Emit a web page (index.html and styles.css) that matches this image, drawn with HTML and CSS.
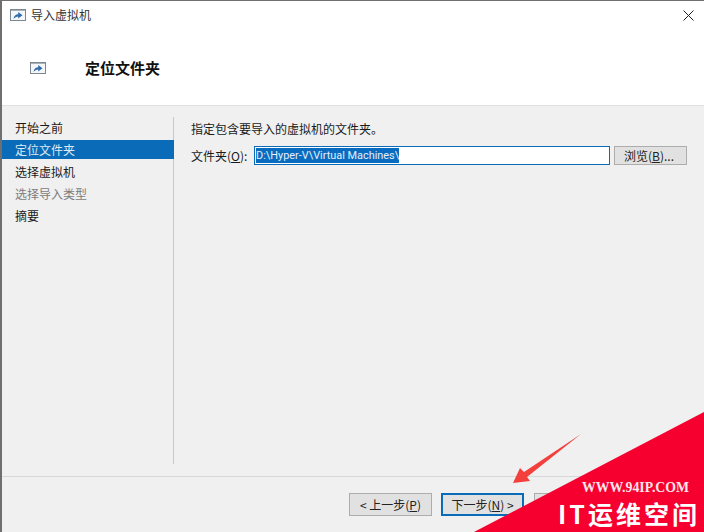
FILE: index.html
```html
<!DOCTYPE html>
<html lang="zh">
<head>
<meta charset="utf-8">
<title>导入虚拟机</title>
<link rel="stylesheet" href="styles.css">
</head>
<body>
<div class="window">
  <header class="head">
    <div class="titlebar">
      <svg class="icon" viewBox="0 0 16 12"><rect x=".5" y=".5" width="15" height="11" fill="#f4f6f8" stroke="#7d8792"/><rect x="1" y="1" width="14" height="1" fill="#a9b1ba"/><path d="M3.5 10 C3.8 6.8 5.8 5.3 8.2 5.2 V3 L12.5 6.3 8.2 9.4 V7.4 C6.4 7.4 4.8 8.2 3.5 10Z" fill="#2f6ea8"/></svg>
      <span class="wintitle">导入虚拟机</span>
      <svg class="close" viewBox="0 0 11 11"><path d="M.5.5 10.5 10.5M10.5.5.5 10.5" stroke="#222" stroke-width="1" fill="none"/></svg>
    </div>
    <div class="banner">
      <svg class="icon" viewBox="0 0 16 12"><rect x=".5" y=".5" width="15" height="11" fill="#f4f6f8" stroke="#7d8792"/><rect x="1" y="1" width="14" height="1" fill="#a9b1ba"/><path d="M3.5 10 C3.8 6.8 5.8 5.3 8.2 5.2 V3 L12.5 6.3 8.2 9.4 V7.4 C6.4 7.4 4.8 8.2 3.5 10Z" fill="#2f6ea8"/></svg>
      <h1 class="pagetitle">定位文件夹</h1>
    </div>
  </header>
  <main class="body">
    <nav class="steps">
      <div class="step">开始之前</div>
      <div class="step current">定位文件夹</div>
      <div class="step">选择虚拟机</div>
      <div class="step disabled">选择导入类型</div>
      <div class="step">摘要</div>
    </nav>
    <section class="content">
      <p class="lead">指定包含要导入的虚拟机的文件夹。</p>
      <div class="field">
        <label class="label">文件夹(<u>O</u>):</label>
        <div class="input"><span class="selected">D:\Hyper-V\Virtual Machines\</span></div>
        <button class="btn browse">浏览(<u>B</u>)...</button>
      </div>
    </section>
  </main>
  <footer class="foot">
    <button class="btn nav">&lt; 上一步(<u>P</u>)</button>
    <button class="btn nav primary">下一步(<u>N</u>) &gt;</button>
    <button class="btn nav"></button>
  </footer>
</div>
<svg class="overlay" viewBox="0 0 704 532">
  <polygon points="704,412 704,532 474,532" fill="#f6002f"/>
  <polygon points="581,434 527,477 530,481 513,483 520,468 524,472" fill="#f4403c"/>
</svg>
<div class="brand">
  <div class="url">WWW.94IP.COM</div>
  <div class="name">IT运维空间</div>
</div>
</body>
</html>
```
FILE: styles.css
```css
* { box-sizing: border-box; }
html, body { margin: 0; height: 100%; }
body {
  width: 704px;
  height: 532px;
  overflow: hidden;
  position: relative;
  font-family: "Noto Sans CJK SC", "Noto Sans", sans-serif;
  font-size: 12px;
  line-height: 16px;
  color: #1a1a1a;
  background: #f0f0f0;
}
.window {
  width: 704px;
  height: 532px;
  display: flex;
  flex-direction: column;
  border-top: 1px solid #6f6f6f;
  border-left: 2px solid #6f6f6f;
}
.head {
  height: 105px;
  background: #fff;
  border-bottom: 1px solid #dfdfdf;
  flex: none;
}
.titlebar {
  display: flex;
  align-items: center;
  height: 28px;
  padding-left: 8px;
  padding-right: 10px;
}
.icon { width: 16px; height: 12px; flex: none; }
.wintitle { margin-left: 5px; color: #333; }
.close { width: 11px; height: 11px; margin-left: auto; }
.banner {
  display: flex;
  align-items: center;
  height: 76px;
  padding-left: 28px;
}
.banner .icon { margin-top: 2px; }
.pagetitle {
  margin: 2px 0 0 39px;
  font-size: 15px;
  font-weight: 700;
  line-height: 20px;
  color: #111;
}
.body {
  flex: 1;
  display: flex;
  min-height: 0;
  padding-top: 11px;
  padding-bottom: 12px;
}
.steps {
  width: 172px;
  flex: none;
  display: flex;
  flex-direction: column;
  gap: 3px;
  border-right: 1px solid #c8c8c8;
  padding-top: 1px;
}
.step {
  height: 19px;
  line-height: 19px;
  padding-left: 13px;
}
.step.current { background: #0a6cb8; color: #dfeaf4; margin-right: -1px; }
.step.disabled { color: #7c7c7c; }
.content {
  flex: 1;
  padding: 2px 17px 0 17px;
}
.lead { margin: 0; height: 19px; line-height: 19px; }
.field {
  display: flex;
  align-items: center;
  margin-top: 8px;
}
.label { width: 63px; flex: none; }
.input {
  width: 356px;
  height: 19px;
  border: 1px solid #0a6cb8;
  background: #fff;
  padding: 1px;
  display: flex;
  flex: none;
}
.selected {
  background: #0a6cc0;
  color: #e4eef8;
  font-family: Roboto, sans-serif;
  font-size: 10.9px;
  line-height: 15px;
  white-space: nowrap;
}
.btn {
  font: inherit;
  color: #222;
  background: #e1e1e1;
  border: 1px solid #adadad;
  padding: 0;
  border-radius: 0;
  white-space: nowrap;
}
.browse { width: 73px; height: 19px; margin-left: 4px; padding-right: 3px; line-height: 17px; }
.foot {
  height: 56px;
  flex: none;
  border-top: 1px solid #d8d8d8;
  display: flex;
  align-items: flex-start;
  gap: 9px;
  padding: 16px 0 0 347px;
}
.nav { width: 83px; height: 23px; }
.nav.primary { border: 2px solid #0a6cb8; margin-right: 1px; }
.overlay {
  position: absolute;
  left: 0;
  top: 0;
  width: 704px;
  height: 532px;
}
.brand {
  position: absolute;
  left: 558px;
  top: 480px;
  width: 146px;
  color: #fff;
  font-weight: 700;
}
.url {
  margin-left: 24px;
  font-family: "Liberation Serif", serif;
  font-size: 13.8px;
  line-height: 16px;
  white-space: nowrap;
  color: #fbe6ea;
}
.name {
  margin-top: 1px;
  font-family: "Noto Sans CJK SC", sans-serif;
  font-size: 25px;
  line-height: 32px;
  letter-spacing: 3px;
  white-space: nowrap;
}
```
